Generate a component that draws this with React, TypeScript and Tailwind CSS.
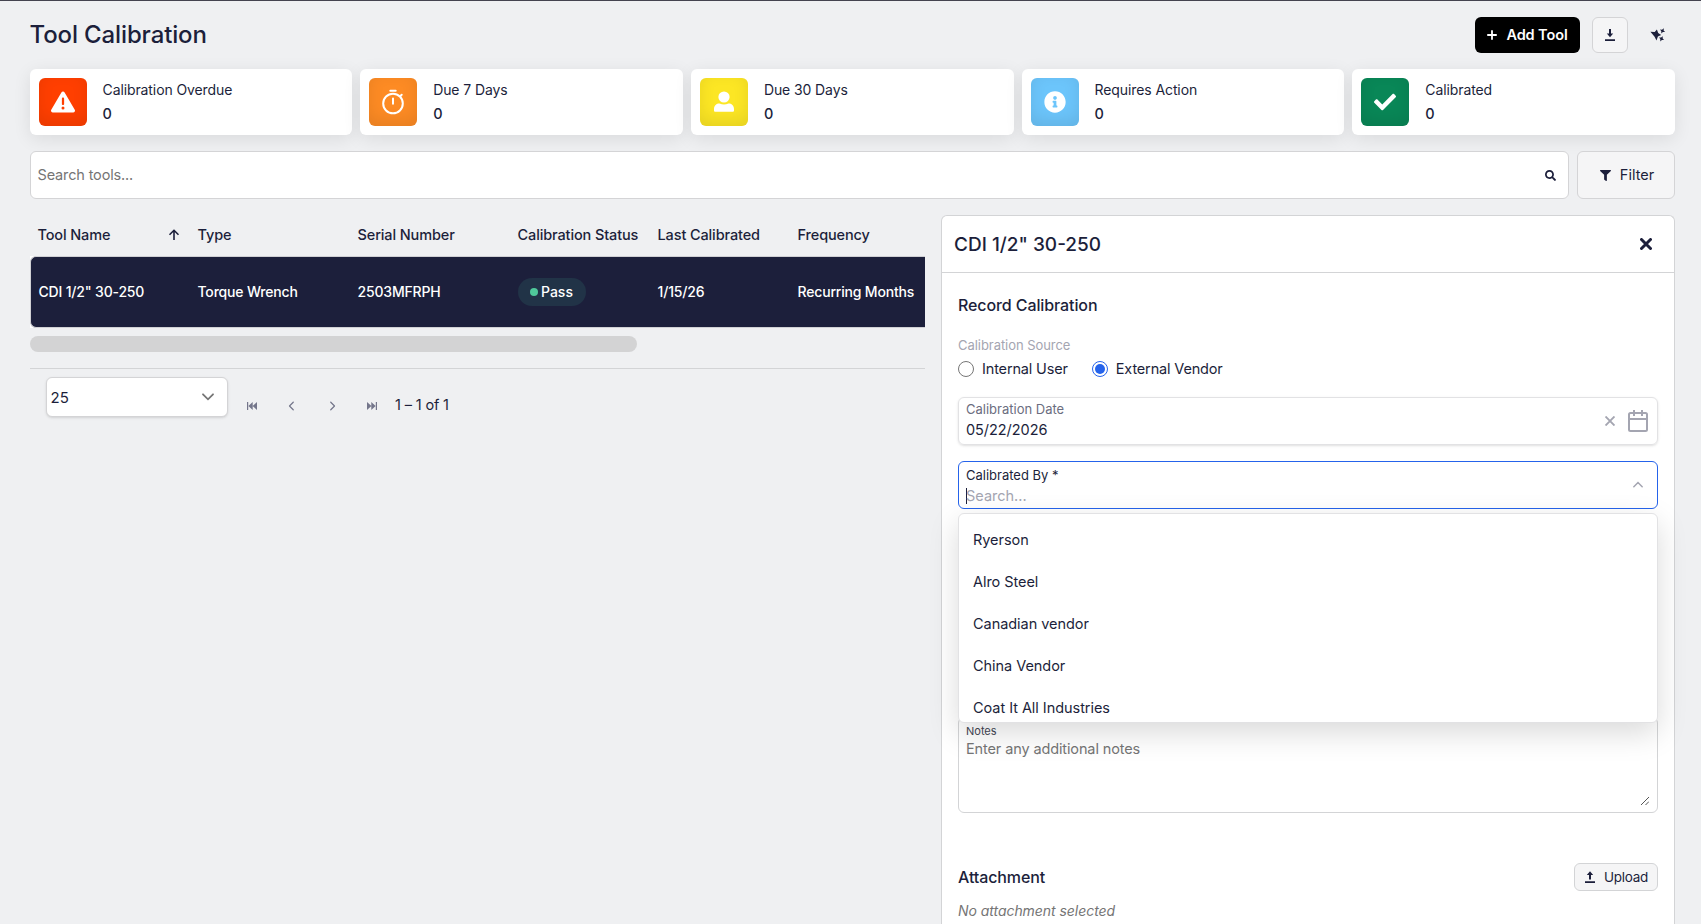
import React from 'react';
import { FaCheck, FaFilter, FaInfoCircle, FaSearch } from 'react-icons/fa';
import { FaChevronLeft, FaChevronRight, FaTriangleExclamation } from 'react-icons/fa6';

const stats = [
  { title: 'Calibration Overdue', value: 0, color: 'bg-[#ff3f00]', icon: <FaTriangleExclamation className="size-6" /> },
  { title: 'Due 7 Days', value: 0, color: 'bg-[#fd8b24]', icon: <StopwatchIcon /> },
  { title: 'Due 30 Days', value: 0, color: 'bg-[#fce624]', icon: <UserIcon /> },
  { title: 'Requires Action', value: 0, color: 'bg-[#6cc5fb]', icon: <FaInfoCircle className="size-[22px]" /> },
  { title: 'Calibrated', value: 0, color: 'bg-[#098757]', icon: <FaCheck className="size-[22px]" /> },
];

const vendors = ['Ryerson', 'Alro Steel', 'Canadian vendor', 'China Vendor', 'Coat It All Industries'];

function StopwatchIcon() {
  return (
    <svg className="size-7" viewBox="0 0 28 28" fill="none" stroke="currentColor" strokeWidth={2} aria-hidden="true">
      <circle cx="14" cy="15.5" r="9.8" />
      <path strokeLinecap="round" d="M11.3 2.7h5.4M14 10.5v5.2M21.5 8l1.2-1.2" />
    </svg>
  );
}

function UserIcon() {
  return (
    <svg className="size-[22px]" viewBox="0 0 22 22" fill="currentColor" aria-hidden="true">
      <circle cx="11" cy="6" r="5.6" />
      <path d="M6.5 12.5C8 13.3 9.5 13.6 11 13.6s3-.3 4.5-1.100c3 0 5.500 2 5.500 5.500v1.500c0 .8-.6 1.300-1.300 1.300H2.300C1.600 20.800 1 20.300 1 19.500V18c0-3.500 2.500-5.500 5.500-5.500z" />
    </svg>
  );
}

function PlusIcon() {
  return (
    <svg className="size-2.5" viewBox="0 0 10 10" stroke="currentColor" strokeWidth={1.8} strokeLinecap="round" aria-hidden="true">
      <path d="M5 .9v8.2M.9 5h8.200" />
    </svg>
  );
}

function DownloadIcon() {
  return (
    <svg className="size-3" viewBox="0 0 12 12" fill="currentColor" aria-hidden="true">
      <path d="M5 0h2v4.500h2.200L6 8.200 2.800 4.500H5zM1 10.300h10V12H1z" />
    </svg>
  );
}

function UploadIcon() {
  return (
    <svg className="size-3" viewBox="0 0 12 12" fill="currentColor" aria-hidden="true">
      <path d="M5 8.500h2V4h2.200L6 .3 2.800 4H5zM1 10.300h10V12H1z" />
    </svg>
  );
}

function SparkIcon() {
  return (
    <svg className="size-4" viewBox="0 0 16 16" fill="currentColor" aria-hidden="true">
      <path d="M.4 4.700l4.300.2L6.900 2.400l1.300 3.600 3 1.900-3.300 1.500-1.400 4L4.600 9.700z" />
      <path d="M10 2.600l2 .2 1.900-1.500-.3 2.100 1.500 1.700-2.200-.1-1.600 1.500v-2.200zM9 10.400l2.100.1 1.700-1.300-.2 2.100 1.400 1.700-2.100-.1-1.600 1.500V12.100z" />
    </svg>
  );
}

function Chevron({ className }: { className: string }) {
  return (
    <svg className={className} viewBox="0 0 12 8" fill="none" stroke="currentColor" strokeWidth={1.8} strokeLinecap="round" aria-hidden="true">
      <path d="M1 1.300l5 5 5-5" />
    </svg>
  );
}

function SkipIcon({ flip = false }: { flip?: boolean }) {
  return (
    <svg className={flip ? 'h-2 w-2.5 rotate-180' : 'h-2 w-2.5'} viewBox="0 0 10 8" fill="currentColor" aria-hidden="true">
      <path d="M0 0h1.200v8H0zM1.400 4l4.300-4v8zM5.600 4L10 0v8z" />
    </svg>
  );
}

function Header() {
  return (
    <header className="flex h-[68px] items-center justify-between pr-[9px]">
      <h1 className="text-2xl font-medium tracking-[-0.13px]">Tool Calibration</h1>
      <div className="flex items-center">
        <button className="flex h-9 w-[105px] items-center justify-center gap-[9px] rounded-md bg-black text-[14.5px] font-semibold text-white">
          <PlusIcon />
          <span className="tracking-[-0.1px]">Add Tool</span>
        </button>
        <button className="ml-3 flex size-9 items-center justify-center rounded-md border border-[#d4d4d6] bg-[#f5f5f6]">
          <DownloadIcon />
        </button>
        <button className="ml-[22px] flex size-4 items-center justify-center">
          <SparkIcon />
        </button>
      </div>
    </header>
  );
}

function StatCards() {
  return (
    <div className="grid grid-cols-5 gap-2">
      {stats.map((stat) => (
        <div key={stat.title} className="flex h-[66px] items-center gap-4 rounded-md bg-white px-[9px] shadow-[0_4px_18px_rgba(0,0,0,0.09)]">
          <div className={`flex size-12 items-center justify-center rounded-md text-white shadow-[inset_0_-6px_16px_rgba(0,0,0,0.09)] ${stat.color}`}>
            {stat.icon}
          </div>
          <div className="text-sm leading-6 tracking-[-0.1px]">
            <p>{stat.title}</p>
            <p className="text-[14.5px] leading-6 font-medium">{stat.value}</p>
          </div>
        </div>
      ))}
    </div>
  );
}

function SearchBar() {
  return (
    <div className="mt-4 flex gap-2">
      <div className="flex h-12 flex-1 items-center justify-between rounded-md border border-[#d4d4d6] bg-white pr-3 pl-[7px]">
        <span className="text-[14.5px] tracking-[-0.15px] text-[#757575]">Search tools...</span>
        <FaSearch className="size-[11px]" />
      </div>
      <button className="flex h-12 w-[98px] items-center justify-center gap-[9px] rounded-md border border-[#d4d4d6] bg-[#f5f5f6] pl-0.5 text-[14.5px]">
        <FaFilter className="size-[11px]" />
        Filter
      </button>
    </div>
  );
}

function ToolTable() {
  return (
    <section className="w-[895.5px] shrink-0">
      <div className="grid h-[41px] grid-cols-[160px_160px_160px_140px_140px_135px] items-center pb-0.5 text-[14.5px] font-medium tracking-[-0.12px] whitespace-nowrap">
        <div className="flex items-center justify-between pr-2.5 pl-2">
          Tool Name
          <svg className="size-3" viewBox="0 0 12 12" fill="none" stroke="currentColor" strokeWidth={1.6} aria-hidden="true">
            <path d="M6 11V1.500M1.500 5.700L6 1.300l4.500 4.400" />
          </svg>
        </div>
        <div className="pl-2">Type</div>
        <div className="pl-2">Serial Number</div>
        <div className="pl-2">Calibration Status</div>
        <div className="pl-2">Last Calibrated</div>
        <div className="pl-2">Frequency</div>
      </div>
      <div className="bg-white">
        <div className="grid h-[72px] grid-cols-[160px_160px_160px_140px_140px_134px] items-center rounded-l-md border border-r-0 border-[#d0d0d4] bg-[#1c1f3b] text-sm font-medium tracking-[-0.18px] whitespace-nowrap text-white">
          <div className="pl-2">CDI 1/2" 30-250</div>
          <div className="pl-[7px]">Torque Wrench</div>
          <div className="pl-[7px]">2503MFRPH</div>
          <div className="pl-[7px]">
            <span className="flex h-7 w-[68px] items-center gap-[3.5px] rounded-full bg-[#213347] pl-3">
              <span className="size-2 rounded-full bg-[#4fc99b]" />
              <span className="tracking-normal">Pass</span>
            </span>
          </div>
          <div className="pl-[7px]">1/15/26</div>
          <div className="pl-[7px]">Recurring Months</div>
        </div>
      </div>
      <div className="mt-2 h-4 w-[607px] rounded-full bg-[#d3d3d4]" />
      <div className="mt-4 flex border-t border-[#d3d4d6] pt-2 pl-4">
        <div className="flex h-10 w-[182px] items-center justify-between rounded-md border border-[#d4d4d6] bg-white pt-0.5 pr-[13px] pl-1 text-[15px] shadow-sm">
          25
          <Chevron className="mb-0.5 h-2 w-3 text-[#757575]" />
        </div>
        <div className="ml-[19px] flex items-center gap-[30px] pt-[17px] text-[#74768b]">
          <SkipIcon />
          <FaChevronLeft className="size-2.5" />
          <FaChevronRight className="size-2.5" />
          <SkipIcon flip />
        </div>
        <span className="ml-[18.5px] pt-[17px] text-[14.5px] tracking-[-0.15px]">1 – 1 of 1</span>
      </div>
    </section>
  );
}

function VendorSelect() {
  return (
    <div className="relative mt-4 h-12 rounded-md border border-[#2563eb] pt-[3px] pl-[7px]">
      <p className="text-[13px] leading-5">Calibrated By *</p>
      <p className="mt-px flex items-center text-[14.5px] leading-5 text-[#a4a5b1]">
        <span className="-mr-px h-4 w-px bg-[#1c1f3b]" />
        Search...
      </p>
      <Chevron className="absolute top-[19px] right-3.5 h-[7px] w-2.5 rotate-180 text-[#a4a5b1]" />
      <ul className="absolute top-[51px] -right-px -left-px z-10 h-[210px] overflow-hidden rounded-md border border-[#e2e2e4] bg-white pt-[5px] text-[14.5px] tracking-[-0.05px] shadow-[0_10px_30px_rgba(0,0,0,0.15)]">
        {vendors.map((vendor) => (
          <li key={vendor} className="flex h-[42px] items-center pl-3.5">
            {vendor}
          </li>
        ))}
      </ul>
    </div>
  );
}

function CalibrationPanel() {
  return (
    <aside className="h-[709px] flex-1 rounded-t-md border border-b-0 border-[#d3d4d6] bg-white">
      <div className="flex h-[57px] items-center justify-between border-b border-[#d3d4d6] pr-[22px] pl-3">
        <h2 className="pt-0.5 text-[19px] font-medium">CDI 1/2" 30-250</h2>
        <svg className="size-3" viewBox="0 0 12 12" stroke="currentColor" strokeWidth={3} strokeLinecap="round" aria-hidden="true">
          <path d="M1.500 1.500l9 9M10.500 1.500l-9 9" />
        </svg>
      </div>
      <div className="px-4">
        <h3 className="mt-5 text-base leading-6 font-medium tracking-[-0.1px]">Record Calibration</h3>
        <p className="mt-[18px] text-[13px] leading-5 tracking-[-0.05px] text-[#a4a5b1]">Calibration Source</p>
        <div className="mt-1 flex items-center text-[14.5px] leading-5 tracking-[-0.16px]">
          <span className="size-4 rounded-full border border-[#767676]" />
          <span className="ml-2">Internal User</span>
          <span className="ml-6 flex size-4 items-center justify-center rounded-full border border-[#2563eb]">
            <span className="size-2.5 rounded-full bg-[#2563eb]" />
          </span>
          <span className="ml-2">External Vendor</span>
        </div>

        <div className="mt-[18px] flex h-12 items-center rounded-md border border-[#e2e2e4] pr-[9px] pl-[7px] shadow-sm">
          <div className="flex-1 pb-[3px]">
            <p className="text-[13px] leading-5 text-[#6b6d80]">Calibration Date</p>
            <p className="mt-px text-[14.5px] leading-5 tracking-[-0.05px]">05/22/2026</p>
          </div>
          <svg className="size-2.5 text-[#a4a5b1]" viewBox="0 0 10 10" stroke="currentColor" strokeWidth={1.9} aria-hidden="true">
            <path d="M.5.5l9 9M9.500.5l-9 9" />
          </svg>
          <svg className="ml-[13px] h-[22px] w-5 text-[#a4a5b1]" viewBox="0 0 20 22" fill="none" stroke="currentColor" strokeWidth={2} aria-hidden="true">
            <rect x="1" y="3" width="18" height="18" rx="1.5" />
            <path d="M1 9h18M6 0v6M14 0v6" />
          </svg>
        </div>

        <VendorSelect />

        <div className="relative mt-[208px] h-24 rounded-md border border-[#d3d4d6] pt-[5px] pl-[7px]">
          <p className="text-[11px] leading-4 text-[#444654]">Notes</p>
          <p className="text-[14.5px] leading-5 tracking-[-0.12px] text-[#757575]">Enter any additional notes</p>
          <svg className="absolute right-2 bottom-[7px] size-2" viewBox="0 0 8 8" stroke="#555" strokeWidth={1} aria-hidden="true">
            <path d="M0 8l8-8M4.500 8L8 4.500" />
          </svg>
        </div>

        <div className="mt-[50px] flex items-center justify-between">
          <h3 className="text-base font-medium tracking-[-0.1px]">Attachment</h3>
          <button className="flex h-7 w-[84px] items-center justify-center gap-2 rounded-md border border-[#d3d4d6] bg-[#f5f5f6] text-[13.5px] tracking-[-0.25px]">
            <UploadIcon />
            Upload
          </button>
        </div>
        <p className="mt-2.5 text-sm leading-5 tracking-[-0.05px] text-[#757575] italic">No attachment selected</p>
      </div>
    </aside>
  );
}

export default function App() {
  return (
    <div className="h-[924px] overflow-hidden border-t border-[#44434f] bg-[#eff0f2] pr-[26px] pl-[29.5px] font-['Inter',sans-serif] text-[#1c1f3b]">
      <Header />
      <StatCards />
      <SearchBar />
      <main className="mt-4 flex gap-4">
        <ToolTable />
        <CalibrationPanel />
      </main>
    </div>
  );
}
